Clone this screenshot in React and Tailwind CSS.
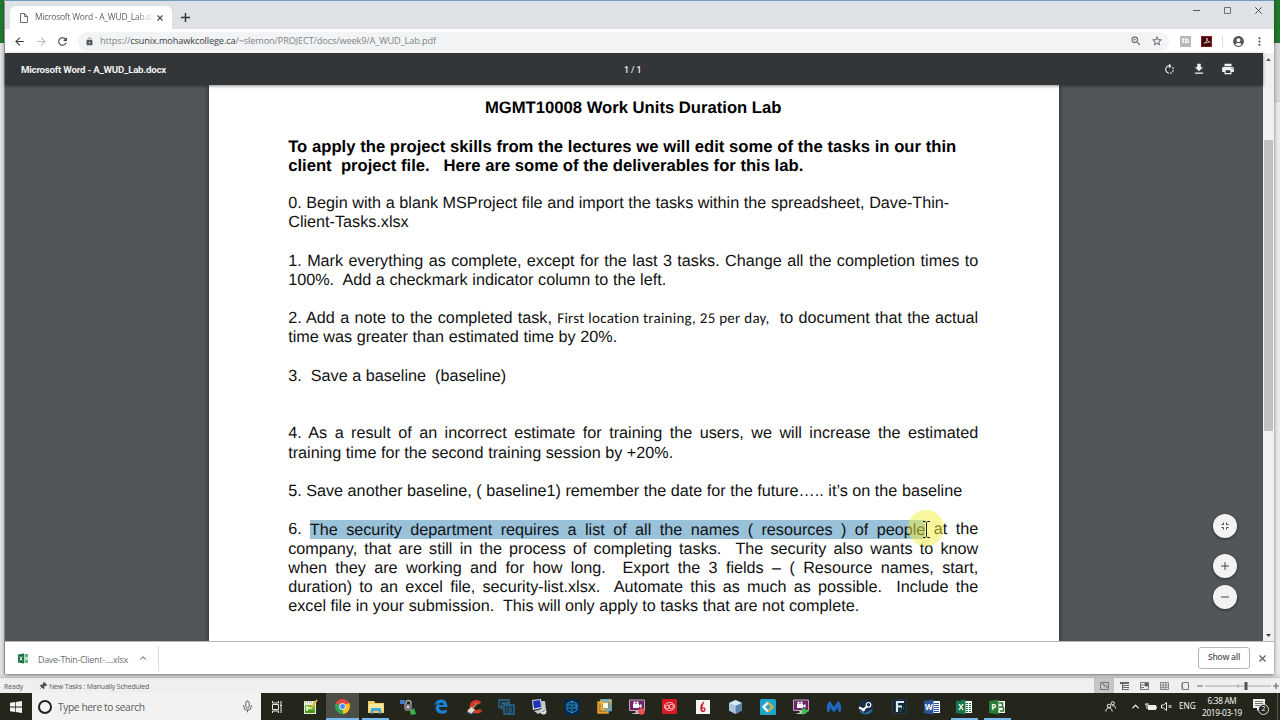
import { ChevronUp, Mic, Pin } from "lucide-react";
import {
  MdArrowBack,
  MdArrowForward,
  MdRefresh,
  MdLock,
  MdZoomIn,
  MdStarBorder,
  MdAccountCircle,
  MdMoreVert,
  MdFileDownload,
  MdPrint,
  MdRotateRight,
} from "react-icons/md";

const ui = "font-['Open_Sans',sans-serif]";

function TabStrip() {
  return (
    <div className="flex h-[28px] items-end bg-[#dee1e6]">
      <div className="ml-[5px] flex h-[23px] w-[162px] items-center rounded-t-[6px] bg-white pl-[10px]">
        <svg width="8" height="10" viewBox="0 0 8 10" fill="none" stroke="#6b6e72" strokeWidth="1">
          <path d="M.5.5h4l3 3v6h-7zM4.5.5v3h3" />
        </svg>
        <span className="ml-[7px] w-[118px] whitespace-nowrap bg-linear-to-r from-[#55585c] from-85% to-[#f4f4f4] bg-clip-text text-[8.5px] tracking-[-0.25px] text-transparent">
          Microsoft Word - A_WUD_Lab.do
        </span>
        <svg className="ml-[4px] shrink-0" width="6" height="6" viewBox="0 0 6 6" stroke="#4a4d51" strokeWidth="1.2">
          <path d="M.5.5l5 5M5.5.5l-5 5" />
        </svg>
      </div>
      <svg className="mb-[7px] ml-[9px]" width="9" height="9" viewBox="0 0 9 9" stroke="#2f3236" strokeWidth="1.4">
        <path d="M4.5 0v9M0 4.5h9" />
      </svg>
      <div className="mb-[15px] ml-auto mr-[12px] flex items-center gap-[24px]">
        <svg width="7" height="7" viewBox="0 0 7 7" stroke="#55585c"><path d="M0 3.5h7" /></svg>
        <svg width="7" height="7" viewBox="0 0 7 7" fill="none" stroke="#6b6e72"><path d="M.5.5h6v6h-6z" /></svg>
        <svg width="7" height="7" viewBox="0 0 7 7" stroke="#4a4d51"><path d="M.3.3l6.4 6.4M6.7.3L.3 6.7" /></svg>
      </div>
    </div>
  );
}

function Toolbar() {
  return (
    <div className="flex h-[24px] items-center bg-white pl-[8px] text-[#55585c]">
      <MdArrowBack size={13} className="shrink-0 text-[#3c4043]" />
      <MdArrowForward size={13} className="ml-[9px] shrink-0 text-[#babcbe]" />
      <MdRefresh size={13} className="ml-[8px] shrink-0 text-[#3c4043]" />
      <div className="ml-[9px] flex h-[19px] w-[1091px] shrink-0 items-center rounded-full bg-[#f1f3f4] pl-[7px]">
        <MdLock size={9} className="text-[#55585c]" />
        <span className="ml-[6px] whitespace-nowrap text-[9.2px] tracking-[-0.13px] text-[#808387]">
          https://<span className="text-[#3c4043]">csunix.mohawkcollege.ca</span>/~slemon/PROJECT/docs/week9/A_WUD_Lab.pdf
        </span>
        <MdZoomIn size={12} className="ml-auto" />
        <MdStarBorder size={12} className="ml-[9px] mr-[6px]" />
      </div>
      <div className="ml-[11px] flex h-[11px] w-[11px] items-center justify-center bg-[#b9b9b9] text-[7px] font-bold text-white">tb</div>
      <div className="ml-[10px] flex h-[11px] w-[11px] items-center justify-center border border-[#8b1a1a] bg-[#3f0508]">
        <svg width="8" height="8" viewBox="0 0 8 8" fill="none" stroke="#e6d5d5" strokeWidth=".8">
          <path d="M4 1c0 3-1 4.5-3 6M4 1c0 3 1.5 4 3.5 4.3M1.5 5.8L6.5 5" />
        </svg>
      </div>
      <div className="ml-[10px] h-[11px] w-px bg-[#d9dbde]" />
      <MdAccountCircle size={13} className="ml-[9px]" />
      <MdMoreVert size={13} className="ml-[8px]" />
    </div>
  );
}

function PdfHeader() {
  return (
    <div className="z-10 flex h-[32px] items-center bg-[#323639] px-[16px] text-[#f1f1f1] shadow-[0_1px_3px_rgba(0,0,0,0.45)]">
      <span className="mt-[2px] w-[603px] whitespace-nowrap font-[Roboto,sans-serif] text-[9.7px] font-bold tracking-[-0.22px]">
        Microsoft Word - A_WUD_Lab.docx
      </span>
      <span className="mt-[3px] font-[Roboto,sans-serif] text-[8.8px] font-medium tracking-[-0.1px]">1 / 1</span>
      <MdRotateRight size={13} className="ml-auto" />
      <MdFileDownload size={14} className="ml-[16px]" />
      <MdPrint size={14} className="ml-[15px] mr-[12px]" />
    </div>
  );
}

// every line is spread to its own measure, blank ones are null
const lines = [
  null,
  { text: "To apply the project skills from the lectures we will edit some of the tasks in our thin", w: 668, bold: true },
  { text: "client\u00a0 project file.\u00a0\u00a0 Here are some of the deliverables for this lab.", w: 515, bold: true },
  null,
  { text: "0. Begin with a blank MSProject file and import the tasks within the spreadsheet, Dave-Thin-", w: 661 },
  { text: "Client-Tasks.xlsx", w: 123 },
  null,
  { text: "1. Mark everything as complete, except for the last 3 tasks. Change all the completion times to", w: 690 },
  { text: "100%.\u00a0 Add a checkmark indicator column to the left.", w: 378 },
  null,
  {
    text: (
      <>
        2. Add a note to the completed task,{" "}
        <span className="inline-block w-[212px] font-[Carlito,'Open_Sans',sans-serif] text-[15px] leading-none tracking-[0.27px] [font-variant-ligatures:none] [text-align-last:left]">
          First location training, 25 per day,
        </span>
        {"\u00a0 "}to document that the actual
      </>
    ),
    w: 690,
  },
  { text: "time was greater than estimated time by 20%.", w: 329 },
  null,
  { text: "3.\u00a0 Save a baseline\u00a0 (baseline)", w: 218 },
  null,
  null,
  { text: "4. As a result of an incorrect estimate for training the users, we will increase the estimated", w: 690 },
  { text: "training time for the second training session by +20%.", w: 385 },
  null,
  { text: "5. Save another baseline, ( baseline1) remember the date for the future….. it’s on the baseline", w: 674 },
  null,
  {
    text: (
      <>
        6. <span className="bg-[#99c1da] py-[0.5px]">The security department requires a list of all the names ( resources ) of people</span> at the
      </>
    ),
    w: 690,
  },
  { text: "company, that are still in the process of completing tasks.\u00a0 The security also wants to know", w: 690 },
  { text: "when they are working and for how long.\u00a0 Export the 3 fields – ( Resource names, start,", w: 690 },
  { text: "duration) to an excel file, security-list.xlsx.\u00a0 Automate this as much as possible.\u00a0 Include the", w: 690 },
  { text: "excel file in your submission.\u00a0 This will only apply to tasks that are not complete.", w: 571 },
];

function Page() {
  return (
    <div className="relative ml-[203.6px] h-full w-[850px] bg-white pl-[79.6px] pt-[13.2px] font-['Liberation_Sans',Arial,sans-serif] text-[16.2px] leading-[19.2px] text-[#111] shadow-[0_0_5px_rgba(0,0,0,0.6)] [text-rendering:geometricPrecision]">
      <div className="w-[690px] text-center text-[16.65px] font-bold leading-[19.2px] text-black">MGMT10008 Work Units Duration Lab</div>
      {lines.map((line, i) =>
        line ? (
          <div
            key={i}
            className={`h-[19.2px] whitespace-nowrap text-justify [text-align-last:justify] ${line.bold ? "text-[16.65px] font-bold leading-[19.2px] text-black" : ""}`}
            style={{ width: line.w }}
          >
            {line.text}
          </div>
        ) : (
          <div key={i} className="h-[19.2px]" />
        )
      )}
      {/* pointer highlight */}
      <div className="absolute left-[699px] top-[425px] h-[36px] w-[36px] rounded-full bg-[#f2ef3c]/50" />
      <svg className="absolute left-[714px] top-[436px]" width="7" height="17" viewBox="0 0 7 17" fill="none" stroke="#222">
        <path d="M0 .5h2.5l1 1 1-1H7M3.5 1v15M0 16.5h2.5l1-1 1 1H7" />
      </svg>
    </div>
  );
}

function RoundButton({ className, children }) {
  return (
    <div className={`flex h-[24px] w-[24px] items-center justify-center rounded-full bg-[#f2f2f2] shadow-[0_1px_3px_rgba(0,0,0,0.5)] ${className}`}>
      <svg width="10" height="10" viewBox="0 0 10 10" fill="none" stroke="#45484b">{children}</svg>
    </div>
  );
}

function Viewer() {
  return (
    <div className="flex h-[588px]">
      <div className="relative flex w-[1258px] flex-col bg-[#525659]">
        <PdfHeader />
        <div className="h-[556px] overflow-hidden">
          <Page />
        </div>
        <div className="absolute left-[1208px] top-[461.4px] z-20">
          <RoundButton>
            <path d="M1.5 3.5h2v-2M8.5 3.5h-2v-2M1.5 6.5h2v2M8.5 6.5h-2v2" />
          </RoundButton>
          <RoundButton className="mt-[16px]">
            <path d="M5 1v8M1 5h8" />
          </RoundButton>
          <RoundButton className="mt-[7px]">
            <path d="M1 5h8" />
          </RoundButton>
        </div>
      </div>
      <div className="flex w-[11px] flex-col items-center bg-[#f1f1f1]">
        <svg className="mt-[5px]" width="5" height="3" viewBox="0 0 5 3"><path d="M0 3L2.5 0 5 3z" fill="#55585c" /></svg>
        <div className="mt-[79px] h-[291px] w-[9px] bg-[#c1c1c1]" />
        <svg className="mb-[4px] mt-auto" width="5" height="3" viewBox="0 0 5 3"><path d="M0 0l2.5 3L5 0z" fill="#404346" /></svg>
      </div>
    </div>
  );
}

function DownloadShelf() {
  return (
    <div className="flex h-[33px] items-center border-t border-[#b5b7b9] bg-white text-[#6a6d71]">
      <svg className="ml-[13px]" width="11" height="11" viewBox="0 0 11 11">
        <path d="M4 1h6v9H4z" fill="#b9dcc7" />
        <path d="M7 1h3v3H7zM7 7h3v3H7z" fill="#66b486" />
        <path d="M0 1.5L6 .5v10l-6-1z" fill="#1e7145" />
        <path d="M1.7 3.5l2.6 4M4.3 3.5l-2.6 4" stroke="#fff" strokeWidth=".9" />
      </svg>
      <span className="ml-[9px] mt-[3px] w-[91px] whitespace-nowrap text-[8.9px] tracking-[-0.25px]">Dave-Thin-Client-....xlsx</span>
      <ChevronUp size={10} strokeWidth={2.5} className="ml-[9px]" />
      <div className="ml-[10px] h-[25px] w-px bg-[#d9dbde]" />
      <div className="ml-auto flex h-[22px] w-[52px] items-center justify-center rounded-[3px] border border-[#b3b5b8] pb-[1px] text-[8.5px] font-semibold tracking-[-0.25px] text-[#55585c]">
        Show all
      </div>
      <svg className="ml-[9px] mr-[8px]" width="7" height="7" viewBox="0 0 7 7" stroke="#55585c" strokeWidth="1.1"><path d="M.5.5l6 6M6.5.5l-6 6" /></svg>
    </div>
  );
}

function StatusBar() {
  return (
    <div className="flex h-[19px] flex-col bg-[#efeff0] text-[#55585c]">
      <div className="h-[4px] border-b border-[#c9c9cb] bg-[#dcdcde]" />
      <div className="flex h-[15px] items-center">
        <span className="ml-[4px] mt-[3px] w-[35px] text-[7px] tracking-[-0.15px]">Ready</span>
        <Pin size={8} fill="#444" className="mt-[1px] rotate-45 text-[#444]" />
        <span className="ml-[2px] mt-[3px] whitespace-nowrap text-[7px] tracking-[-0.18px]">New Tasks : Manually Scheduled</span>
        <div className="ml-auto flex items-center">
          <div className="flex h-[15px] w-[20px] items-center justify-center bg-[#c6c6c6]">
            <svg width="9" height="8" viewBox="0 0 9 8" fill="none" stroke="#777"><path d="M.5.5h8v7h-8zM2 2h2v2h3v2" /></svg>
          </div>
          <svg className="ml-[6px]" width="9" height="8" viewBox="0 0 9 8" fill="none" stroke="#666"><path d="M0 1h9" strokeWidth="2" /><path d="M2.5 3.5H9M2.5 5.5H9M2.5 7.5H9M2.5 2v6" /></svg>
          <svg className="ml-[11px]" width="9" height="8" viewBox="0 0 9 8" fill="none" stroke="#777"><path d="M.5.5h8v7h-8zM0 3h9M0 5.5h4" /><path d="M5 1h3v3H5z" fill="#444" /></svg>
          <svg className="ml-[11px]" width="9" height="8" viewBox="0 0 9 8" fill="none" stroke="#888"><path d="M.5.5h8v7h-8zM3.2 0v8M5.8 0v8M0 3h9M0 5.3h9" /></svg>
          <svg className="ml-[12px]" width="8" height="8" viewBox="0 0 8 8" fill="none" stroke="#777"><path d="M1.5.5h6v7h-6z" /><path d="M0 2h2M0 4h2M0 6h2" /></svg>
          <svg className="ml-[8px] mr-[1px]" width="82" height="8" viewBox="0 0 82 8">
            <path d="M0 4h6M76 4h6M79 1v6" stroke="#666" strokeWidth="1.2" />
            <path d="M8 4h66M41 2v4" stroke="#a8a8a8" />
            <path d="M47.5 0h3v8h-3z" fill="#555" />
          </svg>
        </div>
      </div>
    </div>
  );
}

function OfficeIcon({ letter, color, dark }) {
  return (
    <svg width="16" height="16" viewBox="0 0 16 16">
      <path d="M8 2h8v12H8z" fill="#fff" />
      {letter === "P" ? (
        <path d="M10 4h3.5v4H10M11 12h3.5V8" fill="none" stroke={color} strokeWidth="1.6" />
      ) : (
        <path d="M10 4.5h5M10 6.5h5M10 8.5h5M10 10.5h5M10 12.5h5" stroke={color} strokeWidth="1" />
      )}
      {letter === "X" && <path d="M12.5 3v10" stroke="#fff" />}
      <path d="M0 2l9.5-1.5v15L0 14z" fill={dark} />
      <text x="4.8" y="11" fontSize="8" fontWeight="bold" fill="#fff" textAnchor="middle" fontFamily="Open Sans, sans-serif">{letter}</text>
    </svg>
  );
}

function Recorder({ play }) {
  return (
    <svg width="16" height="16" viewBox="0 0 16 16">
      <path d="M.5 1h15v10.5H.5z" fill="#6d2468" stroke="#c7a3c4" />
      <path d="M4 5h6v4H4zM10 6.5l2.5-1.5v4L10 7.5z" fill="#fff" />
      <circle cx="5.5" cy="3.7" r="1.2" fill="#fff" />
      <circle cx="8.5" cy="3.7" r="1.2" fill="#fff" />
      <path d="M6.5 12h3v2h3v1h-9v-1h3z" fill="#c9c0c9" />
      {play ? <path d="M9 8.5l7 3.7-7 3.8z" fill="#37c046" /> : <circle cx="12.5" cy="12.5" r="3.2" fill="#f0524f" />}
    </svg>
  );
}

const apps = [
  // task view
  <svg width="12" height="12" viewBox="0 0 12 12" fill="none" stroke="#e8e8e6"><path d="M1.5 3.5h6v5h-6zM1.5 0v2h6V0M1.5 12v-2h6v2M10 0v3M10 6v6" /><path d="M9 3.5h2v2H9z" fill="#e8e8e6" stroke="none" /></svg>,
  // notepad++
  <svg width="15" height="16" viewBox="0 0 15 16"><path d="M1 2h12v13H1z" fill="#e4efdc" /><path d="M2 6h10v8H2z" fill="#73b72f" /><path d="M2 11h10v3H2z" fill="#4b941f" /><path d="M4 7v5M4 9h5" stroke="#f1f9df" strokeWidth="1.5" /><path d="M14 1L8 9" stroke="#e6b33c" strokeWidth="1.8" /><path d="M2 3h9" stroke="#889384" strokeDasharray="1 1" /></svg>,
  // chrome
  <span className="flex h-[15px] w-[15px] items-center justify-center rounded-full bg-[conic-gradient(from_-60deg,#e8453c_0_120deg,#fbc116_120deg_240deg,#34a351_240deg)]"><span className="h-[7px] w-[7px] rounded-full border border-white bg-[#4688f4]" /></span>,
  // explorer
  <svg width="16" height="14" viewBox="0 0 16 14"><path d="M0 1h6l1.5 2H16v10H0z" fill="#f3cf66" /><path d="M1 4h14v6H1z" fill="#fbe8a0" /><path d="M3 8h10v5.5h-2.5V11h-5v2.5H3z" fill="#45a6dd" /></svg>,
  // secure client
  <svg width="16" height="16" viewBox="0 0 16 16"><path d="M0 1h5v4H0z" fill="#3f7fca" /><path d="M6 6V4a2.5 2.5 0 015 0v2" fill="none" stroke="#a5a5a5" strokeWidth="1.5" /><path d="M4 5h8v7H6l-2-2z" fill="#74767a" /><circle cx="8" cy="8" r="1.3" fill="#ddd" /><path d="M10 12l4-3 2 6-5 1z" fill="#39b54a" /></svg>,
  // edge
  <svg width="14" height="15" viewBox="0 0 14 15"><path d="M.5 6.5C1 2.5 4 .5 7.200.5 11.500.5 13.500 4 13.500 8H5c.2 4 4.500 4.500 7.800 2.500v3C8 16 2 14.500 1.700 9.500 1.500 6.500 3.500 4.500 5.500 3.700 3.500 4 1.500 5.200.5 6.500zM5 6h4.700c0-3-4.300-3.300-4.700 0z" fill="#1683d8" /></svg>,
  // ccleaner
  <svg width="16" height="16" viewBox="0 0 16 16"><path d="M14 4.5C11 1 5 3 5.500 8S12 14 15 11" fill="none" stroke="#d83b2b" strokeWidth="3.5" /><path d="M11 4L5 11" stroke="#c08a58" strokeWidth="1.8" /><path d="M1 12l4-4 4 3-3 4z" fill="#e9d9c3" /><path d="M1 13l4 2 4-4" stroke="#4c83b8" fill="none" /></svg>,
  // vm windows
  <svg width="17" height="16" viewBox="0 0 17 16" fill="none" stroke="#286f99" strokeWidth="1.3"><path d="M4 8H1V1h10v3M4 11V4h8" /><path d="M6 6h10v9H6z" fill="#182d38" /><circle cx="11" cy="10.5" r="2.7" stroke="#30566a" /><path d="M11 9v2h2" stroke="#4a7a95" strokeWidth=".8" /></svg>,
  // remote desktop
  <svg width="16" height="16" viewBox="0 0 16 16"><path d="M1 1l9-1 1 9-9 2z" fill="#d5dbe8" /><path d="M2 2l7-1 1 7-7 1.5z" fill="#1c35b8" /><path d="M10 2h4l1 9h-4z" fill="#c3c8ce" /><path d="M3 12l8-2 3 2-7 3z" fill="#bfc4cb" /><circle cx="12.5" cy="12.5" r="3" fill="#dfe3e6" /><path d="M11 13l3-2" stroke="#567" /></svg>,
  // hex cube
  <svg width="16" height="16" viewBox="0 0 16 16"><path d="M0 0h16v16H0z" fill="#08294a" /><path d="M8 2l5 3v6l-5 3-5-3V5zM8 2v12M4 6h3M4 9h3M9 6h3v3H9" fill="none" stroke="#2b9bd8" strokeWidth="1" /></svg>,
  // vmware
  <svg width="15" height="15" viewBox="0 0 15 15" fill="none" strokeWidth="2.5"><path d="M1.5 3.5h9v10h-9z" stroke="#e99a2b" /><path d="M4.5 1.5h9v9h-9z" stroke="#f1b64b" /><path d="M4.5 1.5h9" stroke="#63b7dc" /><path d="M13.5 4v7h-5" stroke="#58a8ce" /><path d="M6 4h5v5H6z" fill="#f8f8ef" stroke="none" /></svg>,
  <Recorder />,
  // creative cloud
  <svg width="15" height="15" viewBox="0 0 15 15"><rect width="15" height="15" rx="1" fill="#d5191e" /><ellipse cx="7.5" cy="7.5" rx="5.2" ry="4" fill="none" stroke="#f6c9c9" /><circle cx="5.5" cy="8" r="1.9" fill="none" stroke="#f6c9c9" /><circle cx="9.2" cy="7.5" r="2.2" fill="none" stroke="#f6c9c9" /></svg>,
  // irfan
  <svg width="14" height="14" viewBox="0 0 14 14"><path d="M0 0h14v14H0z" fill="#f8f4f4" /><path d="M8.5 1C4 4 4 7 4.500 10s4.500 3 5 0-2-3.500-3-2c0-2.500 1-4 2-7z" fill="#cc2027" /><circle cx="7.3" cy="9.5" r="1" fill="#fff" /></svg>,
  // virtualbox
  <svg width="15" height="16" viewBox="0 0 15 16"><path d="M7.5 1L14 4v7.5L7.5 15 1 11.5V4z" fill="#8badcb" /><path d="M7.5 1L14 4 7.500 7 1 4z" fill="#d6e6f2" /><path d="M7.5 7L14 4v7.5L7.5 15z" fill="#5d83ab" /><path d="M1 4l6.5 3v8L1 11.5z" fill="#a9c5dc" /></svg>,
  // code sync
  <svg width="16" height="16" viewBox="0 0 16 16"><rect width="16" height="16" rx="1.5" fill="#1fa5cb" /><path d="M8 3.500L3.500 8 8 12.500" fill="none" stroke="#fff" strokeWidth="2.3" /><path d="M8 3.500L12.500 8 8 12.500" fill="none" stroke="#dcae48" strokeWidth="2.3" /></svg>,
  <Recorder play />,
  // malwarebytes
  <svg width="16" height="13" viewBox="0 0 16 13"><path d="M1.5 12C0 7 1 3 4 1l4 6 4-6c3 2 4 6 2.500 11-2 .5-2.500-1-2.500-5L9 11.500H7L4 7c.5 4-.5 5.500-2.500 5z" fill="#1f68c0" /></svg>,
  // steam
  <svg width="16" height="16" viewBox="0 0 16 16"><circle cx="8" cy="8" r="7.5" fill="#1b2d49" /><path d="M1 11a7.5 7.5 0 0014-1l-8 4z" fill="#2c6ea4" /><path d="M1 8.500l4.500 2L10 6.500" fill="none" stroke="#fff" strokeWidth="2.2" /><circle cx="10.5" cy="5.8" r="2.3" fill="#1b2d49" stroke="#fff" strokeWidth="1.2" /><circle cx="5.3" cy="10.8" r="1.7" fill="#fff" /></svg>,
  // f
  <svg width="15" height="15" viewBox="0 0 15 15"><path d="M.5.5h14v14H.5z" fill="#16252f" stroke="#243846" /><path d="M5 2v11M5 3h7M5 7.500h5" stroke="#d4edf8" strokeWidth="2.2" /><path d="M9 10h1M11 9h1M8 12h1" stroke="#4a9bc0" /></svg>,
  <OfficeIcon letter="W" color="#2b579a" dark="#2b579a" />,
  <OfficeIcon letter="X" color="#217346" dark="#16794a" />,
  <OfficeIcon letter="P" color="#31752f" dark="#287c35" />,
];

function Taskbar() {
  return (
    <div className="flex h-[27px] bg-[#24261c] text-white">
      <div className="flex w-[32px] shrink-0 items-center justify-center">
        <svg width="12" height="12" viewBox="0 0 12 12" fill="#f2f2f0"><path d="M0 1.700l5-.7v4.600H0zM5.700.9L12 0v5.600H5.700zM0 6.400h5V11l-5-.7zM5.700 6.400H12V12l-6.300-.9z" /></svg>
      </div>
      <div className="flex w-[229px] shrink-0 items-center bg-[#f2f2f2] text-[#5a5a5a]">
        <div className="ml-[6px] h-[14px] w-[14px] rounded-full border-2 border-[#222]" />
        <span className="ml-[6px] mt-[2px] whitespace-nowrap text-[10.2px] tracking-[-0.38px]">Type here to search</span>
        <Mic size={13} strokeWidth={1.8} className="ml-auto mr-[7px]" />
      </div>
      {apps.map((icon, i) => (
        <div key={i} className={`relative flex w-[32.73px] shrink-0 items-center justify-center ${i === 2 ? "bg-[#4d4f47]" : ""}`}>
          {icon}
          {i === 2 && <div className="absolute inset-x-0 bottom-0 h-[2px] bg-[#76b9ed]" />}
          {(i === 3 || i > 20) && <div className="absolute inset-x-[3px] bottom-0 h-[2px] bg-[#76b9ed]" />}
        </div>
      ))}
      <div className="ml-auto flex items-center">
        <svg width="11" height="11" viewBox="0 0 11 11" fill="none" stroke="#eee"><circle cx="4" cy="5" r="1.8" /><path d="M.8 10.500c.2-5 6.200-5 6.400 0" /><circle cx="7.8" cy="2.3" r="1.6" /><path d="M7 4.800c2-.8 3.500.7 3.500 2.700" /></svg>
        <ChevronUp size={11} strokeWidth={2.4} className="ml-[14px]" />
        <svg className="ml-[4px]" width="12" height="8" viewBox="0 0 12 8"><path d="M3 2h8v5H3z" fill="#eee" /><path d="M0 2h3M1 0v2M3 0v2M2 3v3M11.500 3.500v2" stroke="#eee" /></svg>
        <svg className="ml-[4px]" width="11" height="9" viewBox="0 0 11 9" fill="none" stroke="#eee"><path d="M.5 3h2l3-2.500v8L2.500 6h-2zM7.500 3l3 3M10.500 3l-3 3" /></svg>
        <span className="ml-[7px] w-[17px] text-[8.2px]">ENG</span>
        <div className="ml-[6px] w-[40px] whitespace-nowrap text-center text-[8.2px] leading-[11.5px] tracking-[-0.28px]">
          <div>6:38 AM</div>
          <div>2019-03-19</div>
        </div>
        <div className="relative ml-[11px] h-[16px] w-[17px]">
          <svg width="12" height="13" viewBox="0 0 12 13"><path d="M0 0h12v9H7l-3 3V9H0z" fill="#f2f2f0" /><path d="M2 2.500h8M2 4.500h8M2 6.500h5" stroke="#55564f" strokeWidth=".8" /></svg>
          <div className="absolute left-[5px] top-[5px] flex h-[11px] w-[11px] items-center justify-center rounded-full border border-[#ddd] bg-[#24261c] text-[7px]">2</div>
        </div>
        <div className="ml-[7px] mr-[2px] h-[27px] w-px bg-[#55574f]" />
      </div>
    </div>
  );
}

export default function App() {
  return (
    <div className={`h-[720px] w-[1280px] overflow-hidden bg-[#e3e3e4] leading-normal ${ui}`}>
      <div className="flex h-[674px]">
        <div className="w-[5px] border-r border-[#b0b0b0]">
          <div className="h-[43px] bg-[#217a2b]" />
        </div>
        <div className="z-10 w-[1269px] border-t border-[#6f9dbd] shadow-[0_1px_4px_rgba(0,0,0,0.5)]">
          <TabStrip />
          <Toolbar />
          <Viewer />
          <DownloadShelf />
        </div>
        <div className="w-[6px]">
          <div className="h-[43px] bg-[#217a2b]" />
          <div className="h-[59px] border-b border-[#cfcfcf] bg-[#dadada]" />
          <div className="h-[572px] bg-[#ececed]" />
        </div>
      </div>
      <StatusBar />
      <Taskbar />
    </div>
  );
}
